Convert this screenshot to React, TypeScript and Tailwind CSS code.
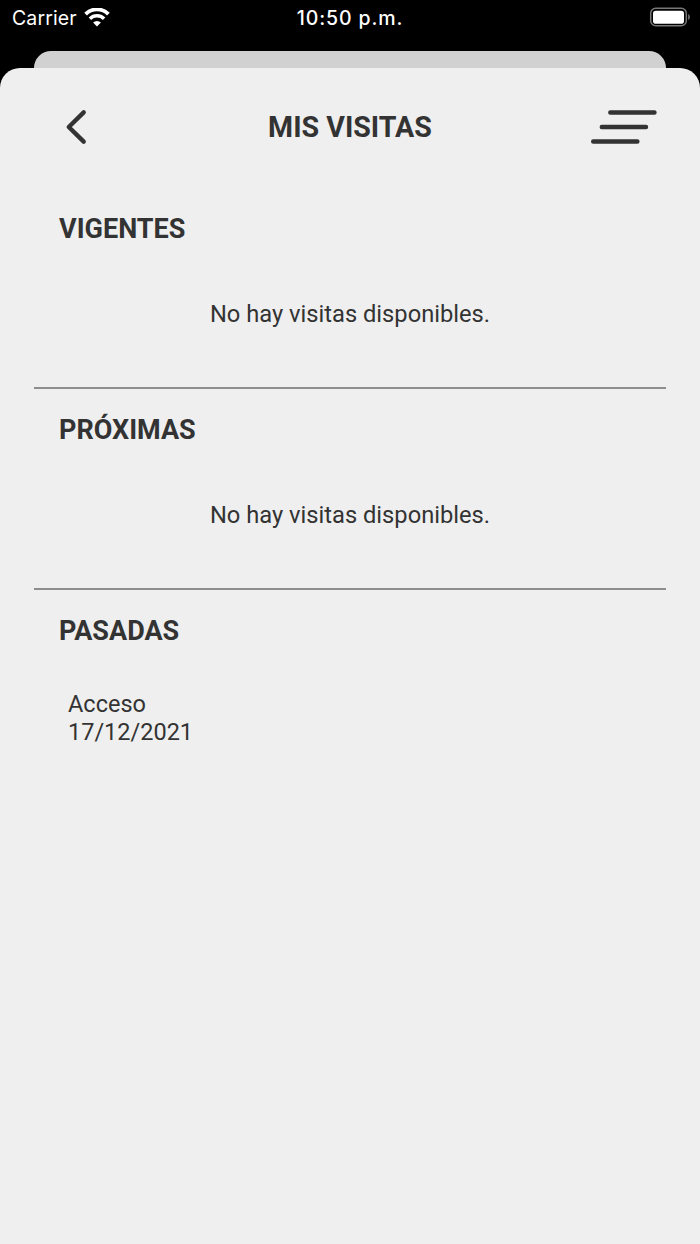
type VisitSection = {
  title: string
  visits: { name: string; date: string }[]
}

const SECTIONS: VisitSection[] = [
  { title: "VIGENTES", visits: [] },
  { title: "PRÓXIMAS", visits: [] },
  { title: "PASADAS", visits: [{ name: "Acceso", date: "17/12/2021" }] },
]

function StatusBar() {
  return (
    <div className="grid h-[51px] grid-cols-3 items-start pt-1 pr-[9px] pl-[11px] font-['Inter',sans-serif] text-[20px] leading-7 text-white">
      <div className="flex items-center gap-[7px]">
        <span className="pl-px text-[19.5px] tracking-[0.1px]">Carrier</span>
        <svg width="26" height="19" viewBox="0 0 26 19" fill="none" stroke="white" className="-mt-0.5">
          <path d="M1.6 6.1a16.2 16.2 0 0 1 22.8 0" strokeWidth="3.9" />
          <path d="M5.9 10.7a10.2 10.2 0 0 1 14.2 0" strokeWidth="3.5" />
          <path d="M13 18.5l-3.9-3.9a5.6 5.6 0 0 1 7.8 0z" fill="white" stroke="none" />
        </svg>
      </div>
      <span className="-ml-[2px] text-center text-[19.5px] font-medium tracking-[0.9px] whitespace-nowrap">10:50 p.m.</span>
      <svg width="42" height="20" viewBox="0 0 42 20" className="mt-[3px] justify-self-end">
        <rect x="1.7" y="1.2" width="35.6" height="17.6" rx="5" fill="none" stroke="#777" strokeWidth="1.5" />
        <rect x="4" y="3.7" width="31" height="13" rx="2.8" fill="white" />
        <path d="M39.2 7c2.2 1 2.2 5 0 6z" fill="#777" />
      </svg>
    </div>
  )
}

function Header() {
  return (
    <header className="mb-0.5 grid h-[118px] grid-cols-[120px_1fr_120px] items-center">
      <button aria-label="Volver" className="pl-[65px]">
        <svg width="22" height="36" viewBox="0 0 22 36" fill="none" stroke="#333" strokeWidth="4.4" strokeLinecap="round" strokeLinejoin="round">
          <path d="M18.7 3.4L3.8 18l14.9 14.6" />
        </svg>
      </button>
      <h1 className="text-center text-[28.6px] leading-10 font-bold">MIS VISITAS</h1>
      <button aria-label="Menú" className="pl-[10px]">
        <svg width="68" height="36" viewBox="0 0 68 36" fill="none" stroke="#333" strokeWidth="4.4" strokeLinecap="round">
          <path d="M20.3 3.5h44.2M11.8 18h44.2M3.2 32.5h44.2" />
        </svg>
      </button>
    </header>
  )
}

export default function App() {
  return (
    <div className="flex h-[1244px] w-[700px] flex-col overflow-hidden bg-black">
      <StatusBar />
      <div className="mx-[34px] h-[17px] shrink-0 rounded-t-[17px] bg-[#d1d1d1]" />
      <main className="flex-1 rounded-t-[20px] bg-[#efefef] font-['Roboto',sans-serif] text-[#333]">
        <Header />
        {SECTIONS.map(({ title, visits }) => (
          <section key={title} className="mx-[34px] h-[201px] border-b-2 border-[#8e8e8e] last:border-b-0">
            <h2 className="pl-[25px] text-[27px] leading-[83px] font-bold">{title}</h2>
            {visits.length === 0 ? (
              <p className="text-center text-[23.7px] leading-[87px]">No hay visitas disponibles.</p>
            ) : (
              visits.map((visit) => (
                <div key={visit.date} className="pt-[18px] pl-[34px] text-[23.5px] leading-[27.5px]">
                  <p>{visit.name}</p>
                  <p>{visit.date}</p>
                </div>
              ))
            )}
          </section>
        ))}
      </main>
    </div>
  )
}
